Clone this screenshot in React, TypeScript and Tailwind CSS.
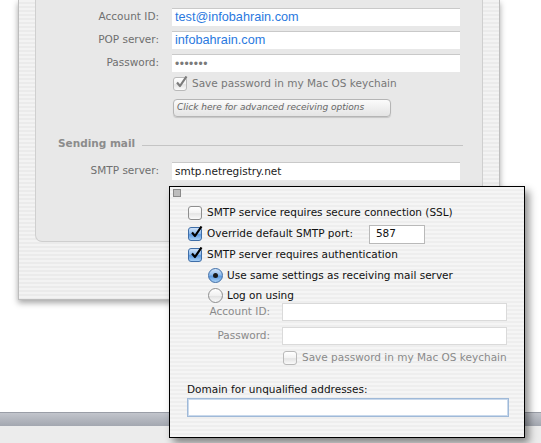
import { ReactNode } from "react";

const lucida = "font-['DejaVu_Sans',sans-serif]";

function Check({ color = "#000" }: { color?: string }) {
  return (
    <svg width="13" height="13" viewBox="0 0 13 13" className="absolute -top-[2px] left-[1px]">
      <path d="M2 6.5 L5 10 L11.5 0.5" fill="none" stroke={color} strokeWidth="2.2" strokeLinejoin="round" />
    </svg>
  );
}

function AquaBox({ checked = false, dim = false }: { checked?: boolean; dim?: boolean }) {
  if (checked && !dim) {
    return (
      <div className="relative w-[14px] h-[14px] shrink-0 rounded-[3px] border border-[#3f6ea8] bg-[linear-gradient(180deg,#cfe2f8_0%,#8fbbec_45%,#5d9ae0_55%,#a9d0f5_100%)]">
        <Check />
      </div>
    );
  }
  return (
    <div
      className={`relative w-[14px] h-[14px] shrink-0 rounded-[3px] border bg-[linear-gradient(180deg,#ffffff_0%,#f2f2f2_50%,#e4e4e4_55%,#fafafa_100%)] ${
        dim ? "border-[#b9b9b9]" : "border-[#8e8e8e]"
      }`}
    >
      {checked && <Check color="#7b7b7b" />}
    </div>
  );
}

function Radio({ on = false }: { on?: boolean }) {
  return on ? (
    <div className="w-[15px] h-[15px] shrink-0 rounded-full border border-[#3f6ea8] bg-[linear-gradient(180deg,#cfe2f8_0%,#8fbbec_45%,#5d9ae0_55%,#a9d0f5_100%)] flex items-center justify-center">
      <div className="w-[5px] h-[5px] rounded-full bg-[#1a1a1a]" />
    </div>
  ) : (
    <div className="w-[15px] h-[15px] shrink-0 rounded-full border border-[#8e8e8e] bg-[linear-gradient(180deg,#ffffff_0%,#f0f0f0_50%,#e2e2e2_55%,#fafafa_100%)]" />
  );
}

function Row({ label, children }: { label: string; children: ReactNode }) {
  return (
    <div className="flex items-center h-[18px]">
      <span className={`w-[123px] text-right text-[10.5px] text-[#6f6f6f] ${lucida}`}>{label}</span>
      <div className="ml-[13px] w-[288px] h-[18px] bg-white border-t border-[#c9c9c9] flex items-center pl-[3px] overflow-hidden whitespace-nowrap">
        {children}
      </div>
    </div>
  );
}

function PopRow({ label }: { label: string }) {
  return (
    <div className="flex items-center h-[18px]">
      <span className={`w-[100px] text-right text-[10.5px] text-[#8a8a8a] ${lucida}`}>{label}</span>
      <div className="ml-[12px] w-[225px] h-[18px] bg-white border border-[#dadada]" />
    </div>
  );
}

export default function App() {
  return (
    <div className="relative w-[541px] h-[443px] overflow-hidden bg-white">
      {/* account sheet */}
      <div className="ml-[18px] w-[482px] h-[300px] border-x border-b border-[#bdbdbd] bg-[repeating-linear-gradient(180deg,#f3f3f3_0px,#f3f3f3_2px,#ebebeb_2px,#ebebeb_4px)] shadow-[0_3px_6px_rgba(0,0,0,0.35)]">
        <div className="ml-[16px] w-[448px] h-[242px] rounded-b-[7px] border-x border-b border-[#cfcfcf] bg-[#e8e8e8] pt-[8px]">
          <div className="flex flex-col gap-[5px]">
            <Row label="Account ID:">
              <span className="text-[12.7px] text-[#2a79e0] font-['Liberation_Sans',sans-serif]">test@infobahrain.com</span>
            </Row>
            <Row label="POP server:">
              <span className="text-[12.7px] text-[#2a79e0] font-['Liberation_Sans',sans-serif]">infobahrain.com</span>
            </Row>
            <Row label="Password:">
              <span className="text-[12px] tracking-[0.5px] text-[#7a7a7a] font-['Liberation_Sans',sans-serif]">•••••••</span>
            </Row>
          </div>
          <div className="ml-[137px] mt-[5px] flex items-center gap-[5px] h-[14px]">
            <AquaBox checked dim />
            <span className={`whitespace-nowrap text-[10.5px] text-[#777] ${lucida}`}>Save password in my Mac OS keychain</span>
          </div>
          <div
            className={`ml-[137px] mt-[8px] w-[218px] h-[18px] rounded-[4px] border border-[#b5b5b5] bg-[linear-gradient(180deg,#fbfbfb_0%,#efefef_50%,#e4e4e4_100%)] shadow-[0_1px_1px_rgba(0,0,0,0.15)] flex items-center pl-[3px] text-[9px] italic text-[#666] whitespace-nowrap ${lucida}`}
          >
            Click here for advanced receiving options
          </div>
          <div className="mt-[19px] ml-[22px] flex items-center h-[16px]">
            <span className={`text-[10.5px] font-bold text-[#8c8c8c] ${lucida}`}>Sending mail</span>
            <div className="ml-[7px] w-[321px] h-px bg-[#c4c4c4] mt-[3px]" />
          </div>
          <div className="mt-[10px]">
            <Row label="SMTP server:">
              <span className={`text-[10.5px] text-[#222] ${lucida}`}>smtp.netregistry.net</span>
            </Row>
          </div>
        </div>
      </div>

      {/* dock-ish bar at the bottom */}
      <div className="mt-[112px] h-[14px] bg-[linear-gradient(180deg,#c2c5cc_0%,#a3a7b0_100%)] border-t border-[#9a9ea7]" />
      <div className="h-[17px] bg-[#ececec]" />

      {/* SMTP options popup */}
      <div
        className={`absolute left-[169px] top-[186px] w-[356px] h-[252px] border border-black bg-[repeating-linear-gradient(180deg,#f5f5f5_0px,#f5f5f5_2px,#eeeeee_2px,#eeeeee_4px)] shadow-[4px_5px_8px_rgba(0,0,0,0.45)] whitespace-nowrap ${lucida}`}
      >
        <div className="ml-[3px] mt-[2px] w-[8px] h-[8px] border border-[#8a8a8a] bg-[#bdbdbd]" />
        <div className="ml-[18px] mt-[9px] flex flex-col gap-[7px] text-[10.5px] text-[#111]">
          <div className="flex items-center gap-[5px] h-[14px]">
            <AquaBox />
            <span>SMTP service requires secure connection (SSL)</span>
          </div>
          <div className="flex items-center gap-[5px] h-[14px]">
            <AquaBox checked />
            <span>Override default SMTP port:</span>
            <div className="ml-[11px] w-[56px] h-[19px] bg-white border border-[#b9b9b9] flex items-center pl-[6px]">587</div>
          </div>
          <div className="flex items-center gap-[5px] h-[14px]">
            <AquaBox checked />
            <span>SMTP server requires authentication</span>
          </div>
          <div className="ml-[20px] flex items-center gap-[4px] h-[13px]">
            <Radio on />
            <span>Use same settings as receiving mail server</span>
          </div>
          <div className="ml-[20px] flex items-center gap-[4px] h-[13px]">
            <Radio />
            <span>Log on using</span>
          </div>
        </div>
        <div className="mt-[1px] flex flex-col gap-[6px]">
          <PopRow label="Account ID:" />
          <PopRow label="Password:" />
        </div>
        <div className="ml-[113px] mt-[7px] flex items-center gap-[5px] h-[12px]">
          <AquaBox dim />
          <span className="text-[10.5px] text-[#8a8a8a]">Save password in my Mac OS keychain</span>
        </div>
        <div className="ml-[17px] mt-[18px] text-[10.5px] text-[#111]">Domain for unqualified addresses:</div>
        <div className="ml-[17px] w-[322px] h-[19px] bg-white border border-[#9fb9d8] shadow-[inset_0_0_0_1px_#c9d9ec]" />
      </div>
    </div>
  );
}
